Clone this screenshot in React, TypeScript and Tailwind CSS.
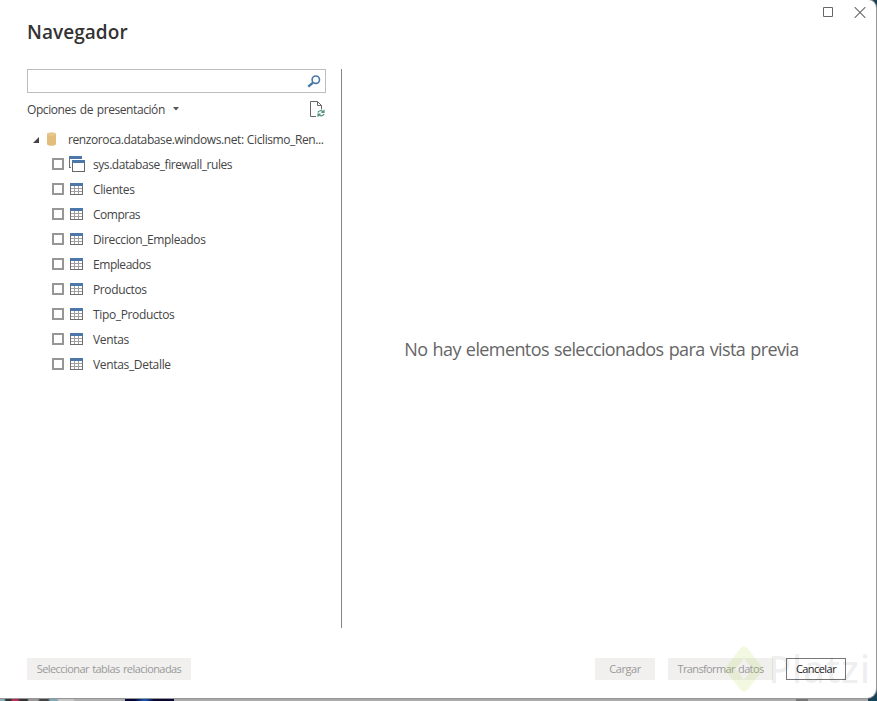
import React from "react";

const tables = [
  { label: "Clientes", spacing: "tracking-[-0.37px]" },
  { label: "Compras", spacing: "tracking-[-0.5px]" },
  { label: "Direccion_Empleados", spacing: "tracking-[-0.37px]" },
  { label: "Empleados", spacing: "tracking-[-0.45px]" },
  { label: "Productos", spacing: "tracking-[-0.38px]" },
  { label: "Tipo_Productos", spacing: "tracking-[-0.36px]" },
  { label: "Ventas", spacing: "tracking-[-0.35px]" },
  { label: "Ventas_Detalle", spacing: "tracking-[-0.33px]" },
];

function TableIcon() {
  return (
    <svg className="mb-px ml-[6px] h-[12px] w-[13px] shrink-0" viewBox="0 0 13 12" shapeRendering="crispEdges">
      <rect width="13" height="12" fill="#a0a0a0" />
      <rect width="13" height="3" fill="#4b78a8" />
      <path fill="#fff" d="M1 3h3v2H1zM5 3h3v2H5zM9 3h3v2H9zM1 6h3v2H1zM5 6h3v2H5zM9 6h3v2H9zM1 9h3v2H1zM5 9h3v2H5zM9 9h3v2H9z" />
      <path fill="#6e6e6e" d="M0 3h1v9H0zM12 3h1v9h-1zM0 11h13v1H0z" />
    </svg>
  );
}

function ViewIcon() {
  return (
    <svg className="mb-px ml-[5px] h-[16px] w-[16px] shrink-0" viewBox="0 0 16 16" shapeRendering="crispEdges">
      <path d="M.5 2v9.5H3" fill="none" stroke="#6e6e6e" />
      <path d="M0 0h13v3H0z" fill="#4b78a8" />
      <path d="M2 3h14v13H2z" fill="#fff" />
      <path d="M3.5 6v9.5h12V6" fill="none" stroke="#666" />
      <path d="M3 4h13v3H3z" fill="#4b78a8" />
    </svg>
  );
}

function Row({ label, view = false, spacing }: { label: string; view?: boolean; spacing: string }) {
  return (
    <li className="flex h-[25px] items-center pl-[25px]">
      <span className="mb-px h-[12px] w-[12px] shrink-0 border-2 border-[#969696] bg-white" />
      {view ? <ViewIcon /> : <TableIcon />}
      <span className={`${view ? "ml-[8px]" : "ml-[10px]"} whitespace-nowrap text-[12px] leading-[18px] ${spacing}`}>{label}</span>
    </li>
  );
}

function Watermark() {
  return (
    <div className="pointer-events-none absolute bottom-[4px] right-[6px] flex h-[50px] w-[146px] items-center">
      <svg className="h-[50px] w-[42px] shrink-0" viewBox="0 0 42 50">
        <path d="M20 7 34 25 20 43 6 25Z" fill="none" stroke="#a5d52b" strokeOpacity=".14" strokeWidth="9" strokeLinejoin="round" />
      </svg>
      <span className="mb-[2px] ml-[2px] whitespace-nowrap text-[38px] font-semibold leading-[50px] tracking-[0.5px] text-black/[.065]">Platzi</span>
    </div>
  );
}

export default function App() {
  return (
    <div className="flex h-[701px] w-[877px] flex-col overflow-hidden bg-[linear-gradient(90deg,#8bb3bb_0_4px,#333_6px_11px,#b92b59_12px_18px,#333_20px_27px,#999_29px_38px,#444_40px_48px,#83a8b5_50px_57px,#c8c8c8_59px_73px,#b0b0b0_75px_125px,#050536_125px_135px,#174eaf_143px_146px,#080831_154px_174px,#aaa_174px_796px,#777_796px_808px,#aaa_808px_868px,#174258_868px)] font-['Open_Sans','Noto_Sans',sans-serif] text-[#444]">
      <main className="relative flex h-[698px] w-[876px] flex-col rounded-tr-[8px] rounded-br-[9px] bg-white shadow-[0_0_0_1px_#969696]">
        <header className="flex h-[69px] items-start justify-between pl-[27px] pr-[10px]">
          <h1 className="mt-[18px] text-[19px] font-semibold leading-[28px] tracking-[0.05px] text-[#333]">Navegador</h1>
          <div className="mt-[7px] flex gap-[20px]">
            <svg className="h-[11px] w-[11px]" viewBox="0 0 11 11"><path d="M.5.5h9v9h-9z" fill="none" stroke="#666" /></svg>
            <svg className="h-[11px] w-[12px]" viewBox="0 0 12 11"><path d="m.7.2 10.6 10.6M11.3.2.7 10.8" stroke="#666" strokeWidth="1.1" /></svg>
          </div>
        </header>

        <div className="flex h-[559px]">
          <aside className="w-[341px] shrink-0 pl-[27px]">
            <div className="flex h-[24px] w-[299px] items-center justify-end border border-[#bdbdbd] pr-[4px]">
              <svg className="h-[13px] w-[14px]" viewBox="0 0 14 13">
                <circle cx="8.8" cy="4.7" r="3.7" fill="none" stroke="#4677a8" strokeWidth="1.6" />
                <path d="m6 7.6-4.7 4" stroke="#4677a8" strokeWidth="2.4" />
              </svg>
            </div>
            <div className="flex h-[34px] w-[299px] items-center justify-between">
              <div className="flex items-center">
                <span className="text-[12px] leading-[18px] tracking-[-0.42px] [word-spacing:1px]">Opciones de presentación</span>
                <svg className="mb-[2px] ml-[8px] h-[4px] w-[6px]" viewBox="0 0 6 4"><path d="M0 0h6L3 3.5Z" fill="#555" /></svg>
              </div>
              <svg className="mb-px mr-[1px] h-[17px] w-[15px]" viewBox="0 0 15 17" fill="none">
                <path d="M6 15.5H.5V.5h7l4 4v4M7.5.5v4h4" stroke="#666" />
                <path d="M8 11.5c.5-2 4-2.5 5.5-.5M14 8.7v2.6h-2.6M14 13c-1 2.3-4 2.5-5.5.5M8 15.8v-2.6h2.6" stroke="#4d927a" strokeWidth="1.2" />
              </svg>
            </div>
            <div className="flex h-[25px] items-center pl-[6px]">
              <svg className="h-[6px] w-[6px] shrink-0" viewBox="0 0 6 6"><path d="M6 0v6H0Z" fill="#444" /></svg>
              <svg className="mb-[2px] ml-[8px] h-[14px] w-[9px] shrink-0" viewBox="0 0 9 14">
                <path d="M0 2v10c0 2.4 9 2.4 9 0V2" fill="#e2bd7c" />
                <ellipse cx="4.5" cy="2" rx="4.5" ry="1.8" fill="#e8c78e" />
              </svg>
              <span className="ml-[12px] whitespace-nowrap text-[12px] leading-[18px] tracking-[-0.4px] [word-spacing:.5px]">renzoroca.database.windows.net: Ciclismo_Ren...</span>
            </div>
            <ul>
              <Row label="sys.database_firewall_rules" view spacing="tracking-[-0.44px]" />
              {tables.map((table) => <Row key={table.label} label={table.label} spacing={table.spacing} />)}
            </ul>
          </aside>
          <section className="flex flex-1 items-center justify-center border-l border-[#858585] pr-[15px]">
            <p className="whitespace-nowrap text-[18px] leading-[26px] tracking-[-0.6px] text-[#666] [word-spacing:1px]">No hay elementos seleccionados para vista previa</p>
          </section>
        </div>

        <footer className="mt-[30px] flex h-[22px] items-stretch pl-[27px] pr-[30px] text-[11px] leading-[20px]">
          <button className="w-[164px] whitespace-nowrap bg-[#f1f0ef] tracking-[-0.57px] text-[#999] [word-spacing:1px]">Seleccionar tablas relacionadas</button>
          <button className="ml-auto w-[60px] bg-[#f1f0ef] tracking-[-0.4px] text-[#999]">Cargar</button>
          <button className="ml-[13px] w-[105px] whitespace-nowrap bg-[#f1f0ef] tracking-[-0.63px] text-[#999] [word-spacing:1px]">Transformar datos</button>
          <button className="ml-[13px] w-[60px] border border-[#777] bg-white tracking-[-0.55px] text-[#222]">Cancelar</button>
        </footer>
        <Watermark />
      </main>
    </div>
  );
}
